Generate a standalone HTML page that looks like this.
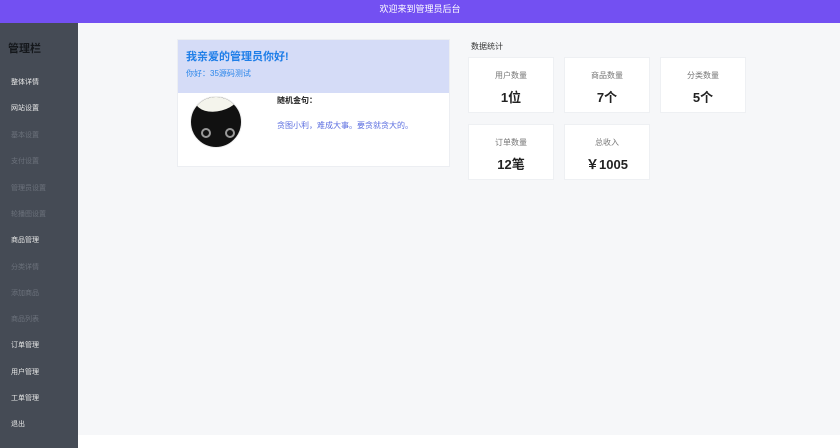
<!DOCTYPE html>
<html><head><meta charset="utf-8"><style>
*{margin:0;padding:0;box-sizing:border-box}
body{width:840px;height:448px;overflow:hidden;background:#f6f7f9;font-family:"Liberation Sans","Noto Sans CJK SC",sans-serif;position:relative}
.top{position:absolute;left:0;top:0;width:840px;height:23px;background:#7350f2;color:#fff;font-size:9px;text-align:center;line-height:18px}
.side{position:absolute;left:0;top:23px;width:78px;height:425px;background:#454b55}
.side h3{position:absolute;left:8px;top:17px;font-size:11px;color:#15181c;font-weight:bold}
.side div{position:absolute;left:11px;font-size:7px;color:#e8e8e8}
.side div.d{color:#6c727c}
.bottom{position:absolute;left:78px;top:435px;width:762px;height:13px;background:#fff}
.card{position:absolute;left:177px;top:39px;width:273px;height:128px;background:#fff;border:1px solid #eceef2}
.card .hd{height:53px;background:#d5dcf7;padding:8px 0 0 8px}
.hd b{display:block;color:#1e7ee8;font-size:11px}
.hd span{display:block;color:#2b86ea;font-size:8px;margin-top:4px}
.av{position:absolute;left:12px;top:56px;width:52px;height:52px;border-radius:50%;background:#111;overflow:hidden;border:1px solid #eee}
.av:before{content:"";position:absolute;left:4px;top:-14px;width:46px;height:28px;border-radius:50%;background:#f4f4ec;transform:rotate(-15deg)}
.av i{position:absolute;top:31px;width:10px;height:10px;border-radius:50%;border:2px solid #999}
.q1{position:absolute;left:99px;top:55px;font-size:8px;font-weight:bold;color:#222}
.q2{position:absolute;left:99px;top:80px;font-size:8px;color:#5b6ee0}
.st{position:absolute;left:471px;top:41px;font-size:8px;color:#333}
.b{position:absolute;width:86px;height:56px;background:#fff;text-align:center;border:1px solid #eef0f3}
.b p{font-size:8px;color:#777;margin-top:12px}
.b h4{font-size:13px;font-weight:600;color:#222;margin-top:6px}
</style></head><body>
<div class="top">欢迎来到管理员后台</div>
<div class="side">
<h3>管理栏</h3>
<div style="top:54px">整体详情</div>
<div style="top:80px">网站设置</div>
<div class="d" style="top:107px">基本设置</div>
<div class="d" style="top:133px">支付设置</div>
<div class="d" style="top:160px">管理员设置</div>
<div class="d" style="top:186px">轮播图设置</div>
<div style="top:212px">商品管理</div>
<div class="d" style="top:239px">分类详情</div>
<div class="d" style="top:265px">添加商品</div>
<div class="d" style="top:291px">商品列表</div>
<div style="top:317px">订单管理</div>
<div style="top:344px">用户管理</div>
<div style="top:370px">工单管理</div>
<div style="top:396px">退出</div>
</div>
<div class="bottom"></div>
<div class="card">
<div class="hd"><b>我亲爱的管理员你好!</b><span>你好：35源码测试</span></div>
<div class="av"><i style="left:10px"></i><i style="left:34px"></i></div>
<div class="q1">随机金句：</div>
<div class="q2">贪图小利，难成大事。要贪就贪大的。</div>
</div>
<div class="st">数据统计</div>
<div class="b" style="left:468px;top:57px"><p>用户数量</p><h4>1位</h4></div>
<div class="b" style="left:564px;top:57px"><p>商品数量</p><h4>7个</h4></div>
<div class="b" style="left:660px;top:57px"><p>分类数量</p><h4>5个</h4></div>
<div class="b" style="left:468px;top:124px"><p>订单数量</p><h4>12笔</h4></div>
<div class="b" style="left:564px;top:124px"><p>总收入</p><h4>￥1005</h4></div>
</body></html>
